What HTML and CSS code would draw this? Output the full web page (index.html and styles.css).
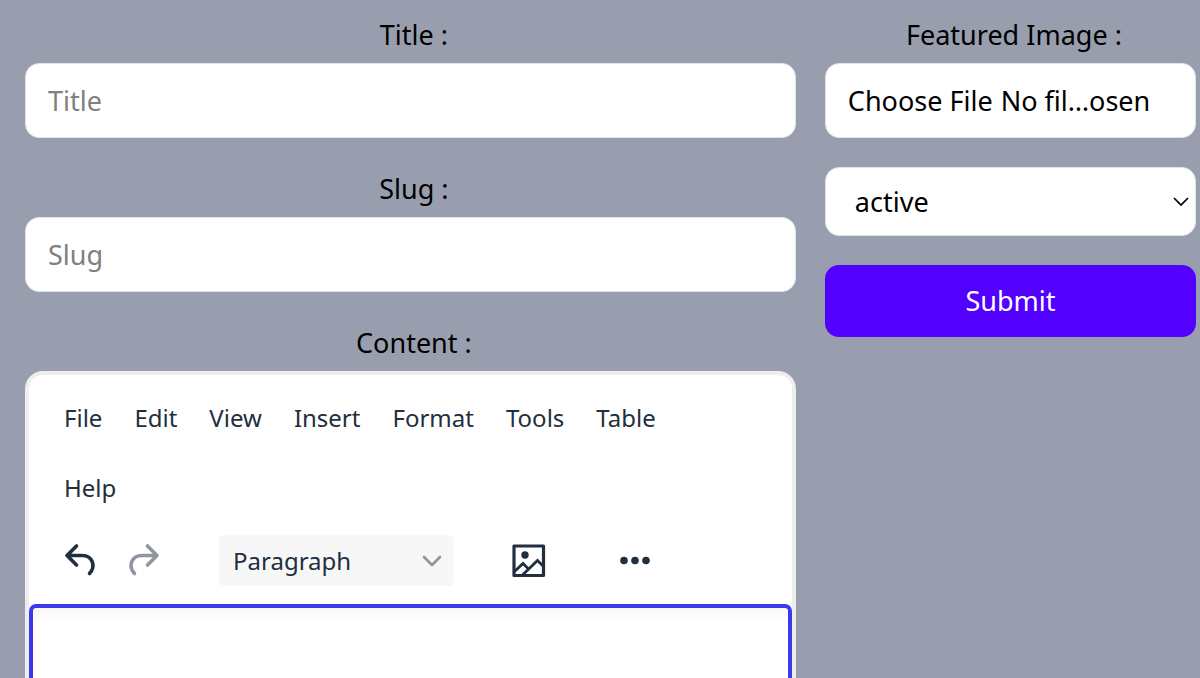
FILE: index.html
```html
<!DOCTYPE html>
<html lang="en">
<head>
<meta charset="utf-8">
<meta name="viewport" content="width=device-width, initial-scale=1">
<title>Post form</title>
<link rel="stylesheet" href="styles.css">
</head>
<body>
<form class="post-form">
  <div class="column">
    <div class="field">
      <label class="label" for="title">Title :</label>
      <input class="control" id="title" type="text" placeholder="Title">
    </div>
    <div class="field">
      <label class="label" for="slug">Slug :</label>
      <input class="control" id="slug" type="text" placeholder="Slug">
    </div>
    <div class="field">
      <label class="label" for="content">Content :</label>
      <div class="editor">
        <div class="menubar" role="menubar">
          <button class="menu" type="button" role="menuitem">File</button>
          <button class="menu" type="button" role="menuitem">Edit</button>
          <button class="menu" type="button" role="menuitem">View</button>
          <button class="menu" type="button" role="menuitem">Insert</button>
          <button class="menu" type="button" role="menuitem">Format</button>
          <button class="menu" type="button" role="menuitem">Tools</button>
          <button class="menu" type="button" role="menuitem">Table</button>
          <button class="menu" type="button" role="menuitem">Help</button>
        </div>
        <div class="toolbar" role="toolbar">
          <div class="group">
            <button class="tool" type="button" aria-label="Undo">
              <svg class="icon" viewBox="0 0 44 44"><path d="M19.500 7L10 16.500l9.500 9.500M10 16.500h15c11 0 14 11 7.500 18" fill="none" stroke="currentColor" stroke-width="3.600" stroke-linecap="round" stroke-linejoin="round"/></svg>
            </button>
            <button class="tool" type="button" aria-label="Redo" disabled>
              <svg class="icon" viewBox="0 0 44 44"><path d="M24.500 7L34 16.500l-9.500 9.500M34 16.500H19c-11 0-14 11-7.500 18" fill="none" stroke="currentColor" stroke-width="3.600" stroke-linecap="round" stroke-linejoin="round"/></svg>
            </button>
          </div>
          <button class="block-format" type="button">
            <span>Paragraph</span>
            <svg class="chevron" viewBox="0 0 20 14"><path d="M2 3l8 8 8-8" fill="none" stroke="currentColor" stroke-width="2.600" stroke-linecap="round" stroke-linejoin="round"/></svg>
          </button>
          <div class="group group-wide">
            <button class="tool" type="button" aria-label="Insert image">
              <svg class="icon" viewBox="0 0 44 44"><g fill="none" stroke="currentColor" stroke-width="3.200" stroke-linejoin="round"><rect x="8" y="7" width="29.500" height="29.500"/><path stroke-width="2.800" stroke-linejoin="miter" d="M8.500 32.500l8.500-8 5 5M16 36.500l15.500-15 6 6"/></g><circle cx="19" cy="16" r="3.700" fill="currentColor"/></svg>
            </button>
            <button class="tool" type="button" aria-label="More">
              <svg class="icon" viewBox="0 0 44 44"><g fill="currentColor"><circle cx="11" cy="21.500" r="3.800"/><circle cx="22" cy="21.500" r="3.800"/><circle cx="33" cy="21.500" r="3.800"/></g></svg>
            </button>
          </div>
        </div>
        <textarea class="edit-area" id="content"></textarea>
      </div>
    </div>
  </div>
  <div class="column">
    <div class="field">
      <label class="label" for="image">Featured Image :</label>
      <input class="control" id="image" type="file">
    </div>
    <div class="select-box">
      <select class="control select" aria-label="Status">
        <option>active</option>
        <option>inactive</option>
      </select>
      <svg class="select-arrow" viewBox="0 0 18 12"><path d="M2 2l7 7 7-7" fill="none" stroke="currentColor" stroke-width="1.700"/></svg>
    </div>
    <button class="submit" type="submit">Submit</button>
  </div>
</form>
</body>
</html>
```
FILE: styles.css
```css
* {
  box-sizing: border-box;
}

html {
  overflow: hidden;
}

body {
  margin: 0;
  background: #999eae;
  color: #000;
  font-family: "Noto Sans", sans-serif;
  font-size: 27px;
  line-height: 43px;
}

button,
input,
select,
textarea {
  font: inherit;
  color: inherit;
}

button {
  border: 0;
  background: none;
  padding: 0;
}

.post-form {
  display: grid;
  grid-template-columns: 27fr 13fr;
  align-items: start;
  gap: 29px;
  padding: 13px 4px 0 25px;
}

.column {
  display: flex;
  flex-direction: column;
  gap: 29px;
  min-width: 0;
}

.field {
  display: flex;
  flex-direction: column;
  gap: 7px;
}

.label {
  padding-left: 7px;
  text-align: center;
}

.control {
  width: 100%;
  padding: 15px 22px;
  border: 1px solid #e0e3ea;
  border-radius: 14px;
  background: #fff;
  line-height: 43px;
}

.control[type="text"] {
  height: 75px;
}

.control::placeholder {
  color: #808080;
  opacity: 1;
}

.control[type="file"] {
  padding-right: 30px;
}

.control::file-selector-button {
  margin: 0 8px 0 0;
  padding: 0;
  border: 0;
  background: none;
  font: inherit;
}

.select-box {
  display: grid;
  align-items: center;
}

.select-box > * {
  grid-area: 1 / 1;
}

.select {
  appearance: none;
  padding: 12px 29px;
}

.select-arrow {
  justify-self: end;
  width: 18px;
  height: 12px;
  margin-right: 6px;
  pointer-events: none;
}

.submit {
  padding: 15px;
  border-radius: 14px;
  background: #5200ff;
  color: #fff;
  line-height: 42px;
}

.editor {
  overflow: hidden;
  border: 4px solid #eee;
  border-radius: 18px;
  background: #fff;
  color: #222f3e;
  font-size: 24px;
}

.menubar {
  display: flex;
  flex-wrap: wrap;
  gap: 0 4px;
  padding: 8px 90px 0 21px;
}

.menu {
  padding: 0 14px;
  line-height: 70px;
}

.toolbar {
  display: flex;
  align-items: center;
  gap: 52px;
  padding: 12px 28px 18px;
}

.group {
  display: flex;
  gap: 22px;
}

.group-wide {
  gap: 63px;
}

.tool {
  display: flex;
}

.tool:disabled {
  color: #9095a0;
}

.icon {
  width: 44px;
  height: 44px;
}

.block-format {
  display: flex;
  align-items: center;
  justify-content: space-between;
  width: 235px;
  padding: 4px 12px 4px 14px;
  border-radius: 6px;
  background: #f7f7f7;
}

.chevron {
  width: 20px;
  height: 14px;
  color: #9095a0;
}

.edit-area {
  display: block;
  width: 100%;
  height: 400px;
  padding: 28px;
  border: 4px solid #3d38eb;
  border-radius: 7px;
  outline: 0;
  background: linear-gradient(#f7f7f7, #fff 16px);
  resize: none;
}
```
